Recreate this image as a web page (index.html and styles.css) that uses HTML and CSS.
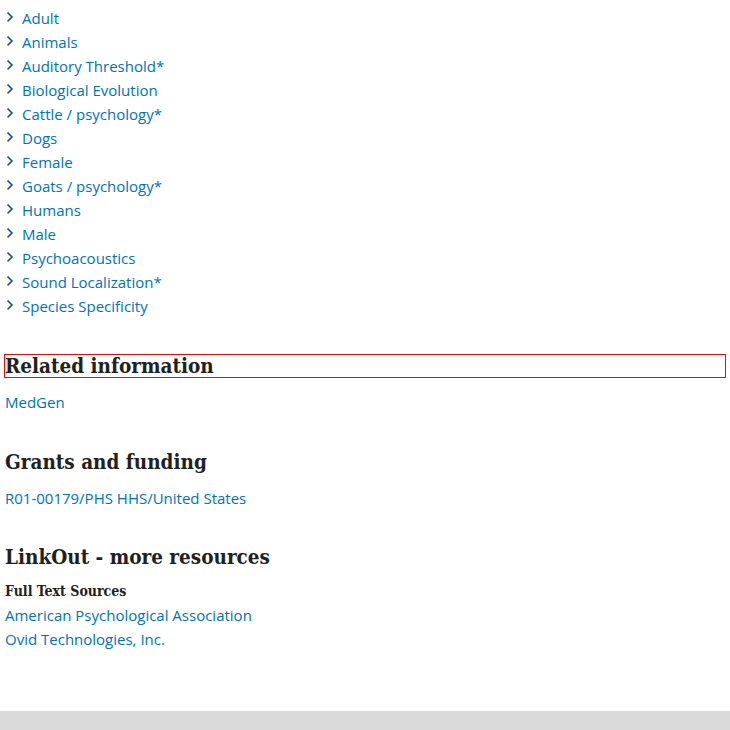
FILE: index.html
```html
<!DOCTYPE html>
<html>
<head>
<meta charset="utf-8">
<link rel="stylesheet" href="styles.css">
</head>
<body>
<div class="page">
  <ul class="mesh">
    <li><svg class="chev" viewBox="0 0 8 12"><path d="M1.5 1.5 L6 6 L1.5 10.5" /></svg><a href="#">Adult</a></li>
    <li><svg class="chev" viewBox="0 0 8 12"><path d="M1.5 1.5 L6 6 L1.5 10.5" /></svg><a href="#">Animals</a></li>
    <li><svg class="chev" viewBox="0 0 8 12"><path d="M1.5 1.5 L6 6 L1.5 10.5" /></svg><a href="#">Auditory Threshold*</a></li>
    <li><svg class="chev" viewBox="0 0 8 12"><path d="M1.5 1.5 L6 6 L1.5 10.5" /></svg><a href="#">Biological Evolution</a></li>
    <li><svg class="chev" viewBox="0 0 8 12"><path d="M1.5 1.5 L6 6 L1.5 10.5" /></svg><a href="#">Cattle / psychology*</a></li>
    <li><svg class="chev" viewBox="0 0 8 12"><path d="M1.5 1.5 L6 6 L1.5 10.5" /></svg><a href="#">Dogs</a></li>
    <li><svg class="chev" viewBox="0 0 8 12"><path d="M1.5 1.5 L6 6 L1.5 10.5" /></svg><a href="#">Female</a></li>
    <li><svg class="chev" viewBox="0 0 8 12"><path d="M1.5 1.5 L6 6 L1.5 10.5" /></svg><a href="#">Goats / psychology*</a></li>
    <li><svg class="chev" viewBox="0 0 8 12"><path d="M1.5 1.5 L6 6 L1.5 10.5" /></svg><a href="#">Humans</a></li>
    <li><svg class="chev" viewBox="0 0 8 12"><path d="M1.5 1.5 L6 6 L1.5 10.5" /></svg><a href="#">Male</a></li>
    <li><svg class="chev" viewBox="0 0 8 12"><path d="M1.5 1.5 L6 6 L1.5 10.5" /></svg><a href="#">Psychoacoustics</a></li>
    <li><svg class="chev" viewBox="0 0 8 12"><path d="M1.5 1.5 L6 6 L1.5 10.5" /></svg><a href="#">Sound Localization*</a></li>
    <li><svg class="chev" viewBox="0 0 8 12"><path d="M1.5 1.5 L6 6 L1.5 10.5" /></svg><a href="#">Species Specificity</a></li>
  </ul>

  <section class="sec sec-related">
    <h2 class="title focused">Related information</h2>
    <ul class="links">
      <li><a href="#">MedGen</a></li>
    </ul>
  </section>

  <section class="sec sec-grants">
    <h2 class="title">Grants and funding</h2>
    <ul class="links">
      <li><a href="#">R01-00179/PHS HHS/United States</a></li>
    </ul>
  </section>

  <section class="sec sec-linkout">
    <h2 class="title title-tight">LinkOut - more resources</h2>
    <h3 class="sub">Full Text Sources</h3>
    <ul class="links">
      <li><a href="#">American Psychological Association</a></li>
      <li><a href="#">Ovid Technologies, Inc.</a></li>
    </ul>
  </section>
</div>
<footer class="footer"></footer>
</body>
</html>
```

FILE: styles.css
```css
html, body {
  margin: 0;
  padding: 0;
  background: #ffffff;
}
body {
  font-family: "Open Sans", "Noto Sans", sans-serif;
  font-size: 15px;
  color: #212121;
}
.page {
  padding: 6px 5px 0 5px;
  height: 711px;
  box-sizing: border-box;
}
a {
  color: #0071bc;
  text-decoration: none;
}
.mesh, .links {
  list-style: none;
  margin: 0;
  padding: 0;
}
.mesh li {
  display: flex;
  align-items: center;
  height: 24px;
  line-height: 24px;
}
.chev {
  width: 8px;
  height: 12px;
  margin: 0 8px 2px 1px;
  fill: none;
  stroke: #205493;
  stroke-width: 1.7;
}
.links li {
  height: 24px;
  line-height: 24px;
}
.title {
  font-family: "DejaVu Serif Condensed", "DejaVu Serif", serif;
  font-weight: bold;
  font-size: 20.5px;
  line-height: 22px;
  color: #212121;
  margin: 0 0 13px 0;
}
.title-tight {
  margin-bottom: 12px;
}
.focused {
  outline: 1px solid #ff0000;
}
.sec-related {
  margin-top: 37px;
}
.sec-grants {
  margin-top: 37px;
}
.sec-linkout {
  margin-top: 36px;
}
.sub {
  font-family: "DejaVu Serif Condensed", "DejaVu Serif", serif;
  font-weight: bold;
  font-size: 14px;
  margin: 0 0 1px 0;
  line-height: 22px;
}
.footer {
  height: 19px;
  background: #dadada;
}
```
